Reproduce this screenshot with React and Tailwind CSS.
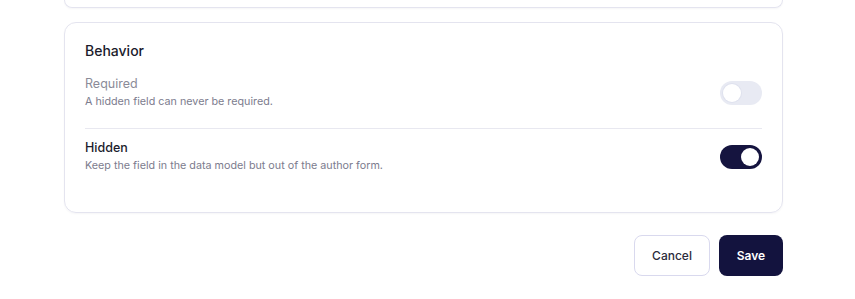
import React from "react";

function Toggle({ on }) {
  return (
    <div
      className={
        "relative w-[42px] h-[24px] rounded-full shrink-0 " +
        (on ? "bg-[#15143f]" : "bg-[#e8eaf3]")
      }
    >
      <div
        className={
          "absolute top-[3px] w-[18px] h-[18px] rounded-full bg-white " +
          (on ? "left-[21px]" : "left-[3px] shadow-[0_0_0_1px_#dfe2ee]")
        }
      />
    </div>
  );
}

export default function App() {
  return (
    <div
      className="w-[855px] h-[299px] bg-white pl-[64px] pr-[72px] overflow-hidden"
      style={{ fontFamily: "Inter, 'Noto Sans', sans-serif" }}
    >
      <div className="h-[8px] border border-t-0 border-[#e4e4ef] rounded-b-[12px] shadow-[0_1px_2px_rgba(20,20,60,0.04)]" />
      <div className="mt-[14px] h-[191px] border border-[#e4e4ef] rounded-[12px] px-[20px] pt-[18px] shadow-[0_1px_2px_rgba(20,20,60,0.04)]">
        <div className="text-[14px] leading-[20px] font-medium text-[#1b1b2c]">Behavior</div>
        <div className="mt-[14px] flex items-center justify-between">
          <div>
            <div className="text-[12.5px] leading-[18px] text-[#8b8b98]">Required</div>
            <div className="text-[10.75px] leading-[16px] text-[#7c7c8e] mt-[1px]">
              A hidden field can never be required.
            </div>
          </div>
          <Toggle on={false} />
        </div>
        <div className="mt-[18px] border-t border-[#e8e8f0]" />
        <div className="mt-[10px] flex items-center justify-between">
          <div>
            <div className="text-[12.5px] leading-[18px] font-medium text-[#1c1c2c]">Hidden</div>
            <div className="text-[10.75px] leading-[16px] text-[#7c7c8e] mt-[1px]">
              Keep the field in the data model but out of the author form.
            </div>
          </div>
          <Toggle on={true} />
        </div>
      </div>
      <div className="mt-[22px] flex justify-end gap-[9px]">
        <button className="w-[76px] h-[41px] rounded-[8px] border border-[#d9d9ee] bg-white text-[12px] font-medium text-[#2b2b3b]">
          Cancel
        </button>
        <button className="w-[64px] h-[41px] rounded-[8px] bg-[#13133e] text-[12px] font-semibold text-white">
          Save
        </button>
      </div>
    </div>
  );
}
